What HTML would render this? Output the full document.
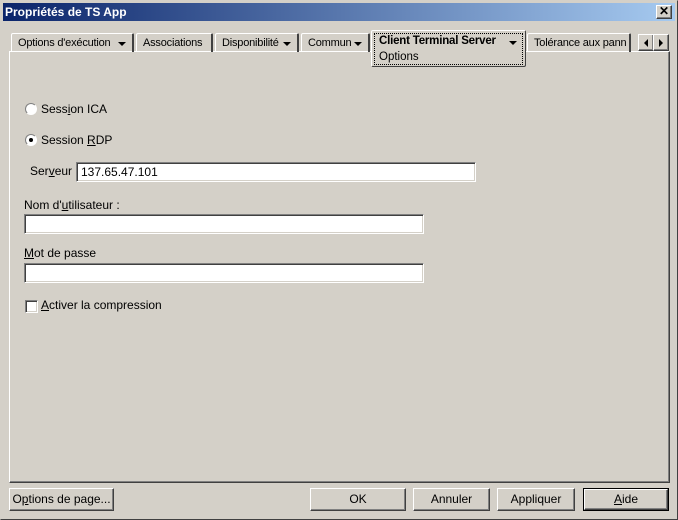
<!DOCTYPE html>
<html><head><meta charset="utf-8"><style>
*{margin:0;padding:0;box-sizing:border-box}
body{width:678px;height:520px;background:#d4d0c8;font-family:"Liberation Sans",sans-serif;font-size:12px;color:#000;position:relative;overflow:hidden}
.a{position:absolute;white-space:nowrap}
.out{border:1px solid;border-color:#fff #404040 #404040 #fff;box-shadow:inset -1px -1px #808080,inset 1px 1px #d4d0c8}
.in{background:#fff;border:1px solid;border-color:#808080 #fff #fff #808080;box-shadow:inset 1px 1px #404040,inset -1px -1px #d4d0c8}
.tab{position:absolute;top:33px;height:19px;border-top:1px solid #fff;border-left:1px solid #fff;border-right:2px solid #404040;padding:3px 0 0 6px;border-radius:2px 2px 0 0;white-space:nowrap;overflow:hidden;font-size:11px;letter-spacing:-0.2px}
.tri{position:absolute;right:6px;top:8px;width:0;height:0;border-left:4px solid transparent;border-right:4px solid transparent;border-top:4px solid #000}
.btn{position:absolute;top:488px;height:23px;text-align:center;line-height:21px}
u{text-decoration:underline}
</style></head><body>
<div class="a" style="left:0;top:0;width:678px;height:520px;border:1px solid;border-color:#d4d0c8 #404040 #404040 #d4d0c8"></div>
<div class="a" style="left:3px;top:3px;width:672px;height:18px;background:linear-gradient(90deg,#0a246a,#a6caf0);color:#fff;font-weight:bold;font-size:12px;padding:2px 0 0 2px">Propriétés de TS App</div>
<div class="a out" style="left:656px;top:5px;width:16px;height:14px;background:#d4d0c8;text-align:center;font-size:12px;line-height:11px;font-weight:bold">✕</div>

<div class="a" style="left:9px;top:51px;width:661px;height:432px;border:1px solid;border-color:#fff #404040 #404040 #fff;box-shadow:inset -1px -1px #808080"></div>

<div class="tab" style="left:11px;width:123px">Options d'exécution<span class="tri"></span></div>
<div class="tab" style="left:136px;width:77px">Associations</div>
<div class="tab" style="left:215px;width:84px">Disponibilité<span class="tri"></span></div>
<div class="tab" style="left:301px;width:69px">Commun<span class="tri"></span></div>
<div class="a" style="left:371px;top:30px;width:155px;height:37px;border:1px solid;border-color:#fff #404040 #404040 #fff;background:#d4d0c8;border-radius:2px"></div>
<div class="a" style="left:374px;top:33px;width:149px;height:32px;border:1px dotted #000"></div>
<div class="a" style="left:379px;top:35px;font-weight:bold;font-size:11.5px;letter-spacing:-0.2px">Client Terminal Server</div>
<div class="a" style="left:509px;top:41px;border-left:4px solid transparent;border-right:4px solid transparent;border-top:4px solid #000"></div>
<div class="a" style="left:379px;top:51px;font-size:11.5px">Options</div>
<div class="tab" style="left:527px;width:104px">Tolérance aux pann</div>
<div class="a out" style="left:638px;top:34px;width:16px;height:17px;background:#d4d0c8"><div class="a" style="left:5px;top:4px;border-top:4px solid transparent;border-bottom:4px solid transparent;border-right:4px solid #000"></div></div>
<div class="a out" style="left:653px;top:34px;width:16px;height:17px;background:#d4d0c8"><div class="a" style="left:5px;top:4px;border-top:4px solid transparent;border-bottom:4px solid transparent;border-left:4px solid #000"></div></div>

<div class="a" style="left:25px;top:103px;width:12px;height:12px;border-radius:50%;background:#fff;border:1px solid;border-color:#808080 #fff #fff #808080"></div>
<div class="a" style="left:41px;top:102px">Sess<u>i</u>on ICA</div>
<div class="a" style="left:25px;top:134px;width:12px;height:12px;border-radius:50%;background:#fff;border:1px solid;border-color:#808080 #fff #fff #808080"><div class="a" style="left:3px;top:3px;width:4px;height:4px;border-radius:50%;background:#000"></div></div>
<div class="a" style="left:41px;top:133px">Session <u>R</u>DP</div>

<div class="a" style="left:30px;top:164px">Ser<u>v</u>eur</div>
<div class="a in" style="left:76px;top:162px;width:400px;height:20px;padding:2px 4px">137.65.47.101</div>
<div class="a" style="left:24px;top:198px">Nom d'<u>u</u>tilisateur :</div>
<div class="a in" style="left:24px;top:214px;width:400px;height:20px"></div>
<div class="a" style="left:24px;top:246px"><u>M</u>ot de passe</div>
<div class="a in" style="left:24px;top:263px;width:400px;height:20px"></div>
<div class="a in" style="left:25px;top:300px;width:13px;height:13px"></div>
<div class="a" style="left:41px;top:298px"><u>A</u>ctiver la compression</div>

<div class="btn out" style="left:9px;width:105px">O<u>p</u>tions de page...</div>
<div class="btn out" style="left:310px;width:96px">OK</div>
<div class="btn out" style="left:413px;width:77px">Annuler</div>
<div class="btn out" style="left:497px;width:78px">Appliquer</div>
<div class="btn" style="left:583px;width:86px;border:1px solid #000"><div class="out" style="height:21px;line-height:19px"><u>A</u>ide</div></div>
</body></html>
